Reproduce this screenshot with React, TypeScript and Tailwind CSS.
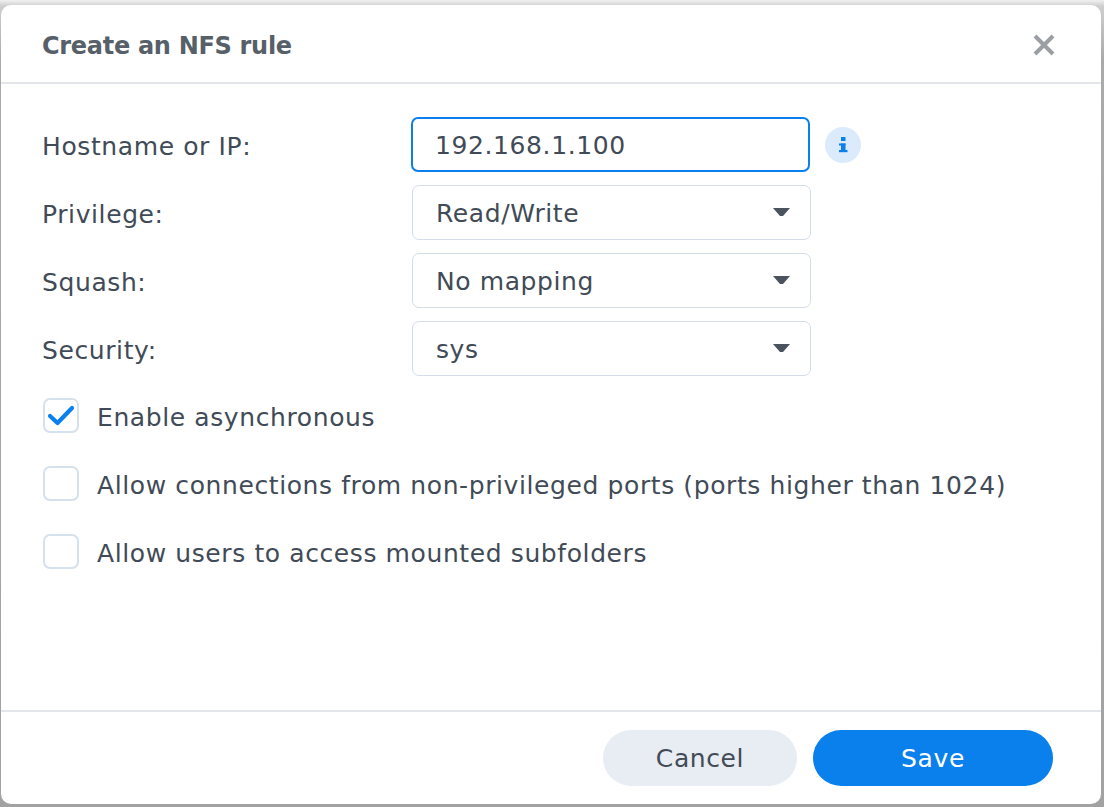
import React from "react";

function Caret() {
  return (
    <svg width="17" height="9" viewBox="0 0 17 9" className="shrink-0">
      <path d="M0 0 H17 L10 8 H7 Z" fill="#4b535e" />
    </svg>
  );
}

function Select({ value }: { value: string }) {
  return (
    <div className="w-[399px] h-[55px] rounded-[7px] border border-[#d3dde7] flex items-center justify-between pl-[23px] pr-[20px]">
      <span className="pt-[3px]">{value}</span>
      <Caret />
    </div>
  );
}

function Checkbox({ checked, label }: { checked?: boolean; label: string }) {
  return (
    <div className="flex items-center h-[35px]">
      <div className="ml-[1px] w-[36px] h-[35px] rounded-[7px] border-2 border-[#d5e1ec] flex items-center justify-center shrink-0">
        {checked && (
          <svg width="30" height="24" viewBox="0 0 30 24">
            <path d="M4 12 L11.5 19 L26 4" fill="none" stroke="#0a7fee" strokeWidth="4.2" strokeLinecap="round" strokeLinejoin="round" />
          </svg>
        )}
      </div>
      <span className="ml-[18px] pt-[4px]">{label}</span>
    </div>
  );
}

export default function App() {
  return (
    <div
      className="w-[1104px] h-[807px] pt-[5px] pl-[1px] pr-[3px] pb-[3px] bg-[linear-gradient(to_bottom,#f0f0f0_0px,#cfcfcf_6px,#aaaaaa_60px,#a2a2a2_100%)]"
      style={{ fontFamily: '"DejaVu Sans", Verdana, sans-serif' }}
    >
      <div className="h-full bg-white rounded-[10px] flex flex-col text-[25px] tracking-[0.6px] text-[#414b57]">
        <div className="h-[79px] shrink-0 border-b-2 border-[#e3e7ec] pl-[41px] pr-[46px] flex items-center justify-between">
          <span className="font-bold text-[#575f69] text-[24px] tracking-[-0.3px] leading-none pt-[5px]">Create an NFS rule</span>
          <svg width="22" height="22" viewBox="0 0 22 22" className="mt-[2px]">
            <path d="M2 2 L20 20 M20 2 L2 20" stroke="#9b9ea3" strokeWidth="4" strokeLinecap="butt" />
          </svg>
        </div>
        <div className="flex-1 pl-[41px] pr-[49px] pt-[33px]">
          <div className="flex flex-col gap-[13px]">
            <div className="flex items-center">
              <div className="w-[369px] shrink-0 pt-[5px]">Hostname or IP:</div>
              <div className="w-[399px] h-[55px] rounded-[7px] border-2 border-[#0a7fee] flex items-center pl-[22px]">
                <span className="pt-[3px]">192.168.1.100</span>
              </div>
              <div className="ml-[15px] w-[36px] h-[36px] rounded-full bg-[#dcebfc] flex items-center justify-center">
                <svg width="12" height="16" viewBox="0 0 12 16">
                  <rect x="4" y="0" width="4.5" height="4" fill="#0a7fee" />
                  <rect x="2" y="6.5" width="6.5" height="2" fill="#0a7fee" />
                  <rect x="4" y="6.5" width="4.5" height="8" fill="#0a7fee" />
                  <rect x="2" y="13" width="8.5" height="2.2" fill="#0a7fee" />
                </svg>
              </div>
            </div>
            <div className="flex items-center">
              <div className="w-[370px] shrink-0 pt-[5px]">Privilege:</div>
              <Select value="Read/Write" />
            </div>
            <div className="flex items-center">
              <div className="w-[370px] shrink-0 pt-[5px]">Squash:</div>
              <Select value="No mapping" />
            </div>
            <div className="flex items-center">
              <div className="w-[370px] shrink-0 pt-[5px]">Security:</div>
              <Select value="sys" />
            </div>
          </div>
          <div className="flex flex-col gap-[33px] mt-[22px]">
            <Checkbox checked label="Enable asynchronous" />
            <Checkbox label="Allow connections from non-privileged ports (ports higher than 1024)" />
            <Checkbox label="Allow users to access mounted subfolders" />
          </div>
        </div>
        <div className="h-[94px] shrink-0 border-t-2 border-[#e3e7ec] flex items-center justify-end gap-[16px] pr-[48px] pb-[1px]">
          <button className="w-[194px] h-[56px] rounded-full bg-[#e8edf3] text-[#434b55] pt-[3px]">Cancel</button>
          <button className="w-[240px] h-[56px] rounded-full bg-[#0a80ec] text-white pt-[3px]">Save</button>
        </div>
      </div>
    </div>
  );
}
